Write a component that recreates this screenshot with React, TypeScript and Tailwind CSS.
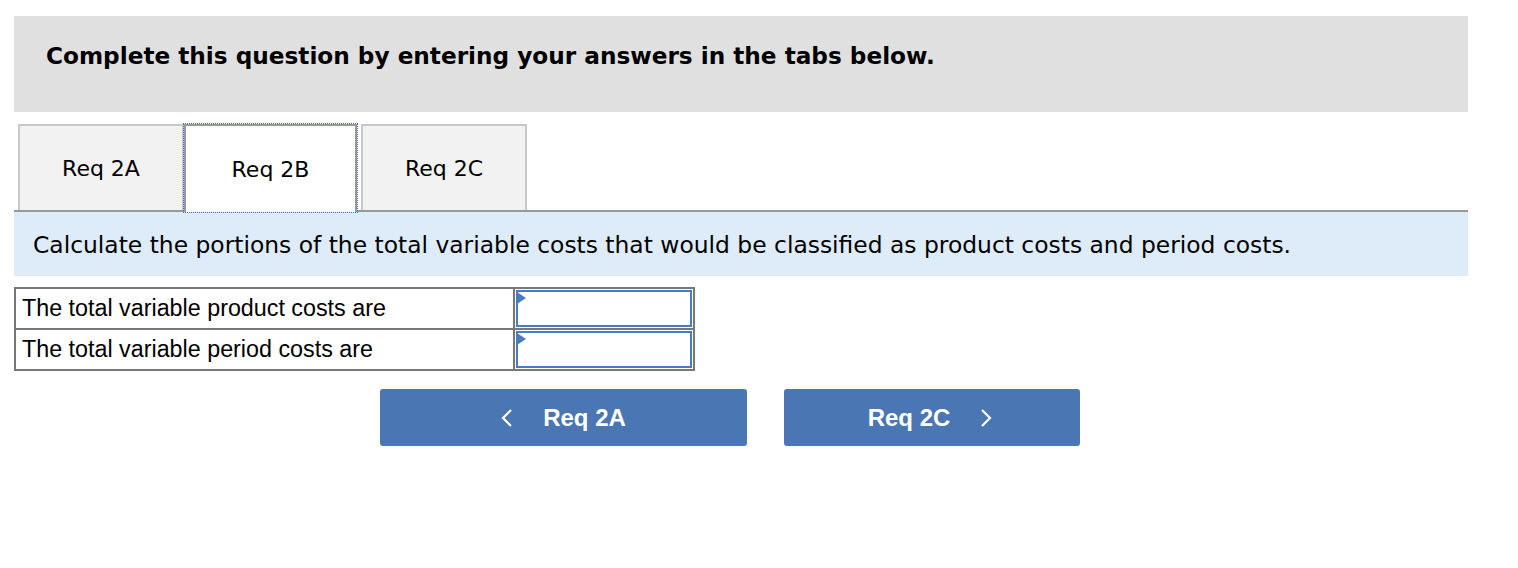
import React from 'react';

const verdana = { fontFamily: '"DejaVu Sans", Verdana, sans-serif' };
const arial = { fontFamily: '"Liberation Sans", Arial, sans-serif' };

const Tab: React.FC<{ label: string; active?: boolean }> = ({ label, active }) =>
  active ? (
    <div className="w-[173px] h-[88px] -mb-[2px] outline outline-1 outline-dotted outline-[#3f6fb0] relative z-10">
      <div className="h-full border-2 border-b-0 border-[#999] bg-white flex items-center justify-center text-[22px] text-black" style={verdana}>
        {label}
      </div>
    </div>
  ) : (
    <div className="w-[166px] h-[86px] border-2 border-b-0 border-[#c8c8c8] bg-[#f2f2f2] flex items-center justify-center text-[22px] text-black" style={verdana}>
      {label}
    </div>
  );

const InputCell: React.FC = () => (
  <td className="border-2 border-[#777] p-[1px] w-[180px]">
    <div className="relative h-[37px] border-2 border-[#4a7bbf] bg-white">
      <div className="absolute -left-[1px] top-0 w-0 h-0 border-t-[6px] border-b-[6px] border-l-[9px] border-t-transparent border-b-transparent border-l-[#4a7bbf]" />
    </div>
  </td>
);

export default function App() {
  return (
    <div className="w-[1518px] h-[568px] bg-white pt-[16px] px-[14px]">
      <div className="w-[1454px] h-[96px] bg-[#e0e0e0] flex items-center pl-[32px] pb-[16px]">
        <h1 className="text-[23.2px] font-bold text-black" style={verdana}>
          Complete this question by entering your answers in the tabs below.
        </h1>
      </div>

      <div className="w-[1454px] mt-[12px] flex items-end pl-[4px] border-b-2 border-[#999]">
        <Tab label="Req 2A" />
        <Tab label="Req 2B" active />
        <div className="w-[4px]" />
        <Tab label="Req 2C" />
      </div>

      <div className="w-[1454px] h-[64px] bg-[#ddecf8] flex items-center pl-[19px] pt-[4px] text-[23.4px] text-black" style={verdana}>
        Calculate the portions of the total variable costs that would be classified as product costs and period costs.
      </div>

      <table className="mt-[11px] border-collapse border-2 border-[#777]" style={arial}>
        <tbody>
          <tr>
            <td className="border-2 border-[#777] w-[499px] h-[41px] pl-[6px] text-[23.3px] leading-none text-black">The total variable product costs are</td>
            <InputCell />
          </tr>
          <tr>
            <td className="border-2 border-[#777] w-[499px] h-[41px] pl-[6px] text-[23.3px] leading-none text-black">The total variable period costs are</td>
            <InputCell />
          </tr>
        </tbody>
      </table>

      <div className="mt-[18px] flex gap-[37px] pl-[366px]">
        <button className="w-[367px] h-[57px] bg-[#4a76b3] rounded-[3px] flex items-center justify-center gap-[30px] text-white text-[24px] font-bold" style={arial}>
          <svg width="12" height="20" viewBox="0 0 12 20" fill="none" stroke="white" strokeWidth="2.2"><path d="M10 2 L2 10 L10 18" /></svg>
          <span>Req 2A</span>
        </button>
        <button className="w-[296px] h-[57px] bg-[#4a76b3] rounded-[3px] flex items-center justify-center gap-[30px] pr-[4px] text-white text-[24px] font-bold" style={arial}>
          <span>Req 2C</span>
          <svg width="12" height="20" viewBox="0 0 12 20" fill="none" stroke="white" strokeWidth="2.2"><path d="M2 2 L10 10 L2 18" /></svg>
        </button>
      </div>
    </div>
  );
}
